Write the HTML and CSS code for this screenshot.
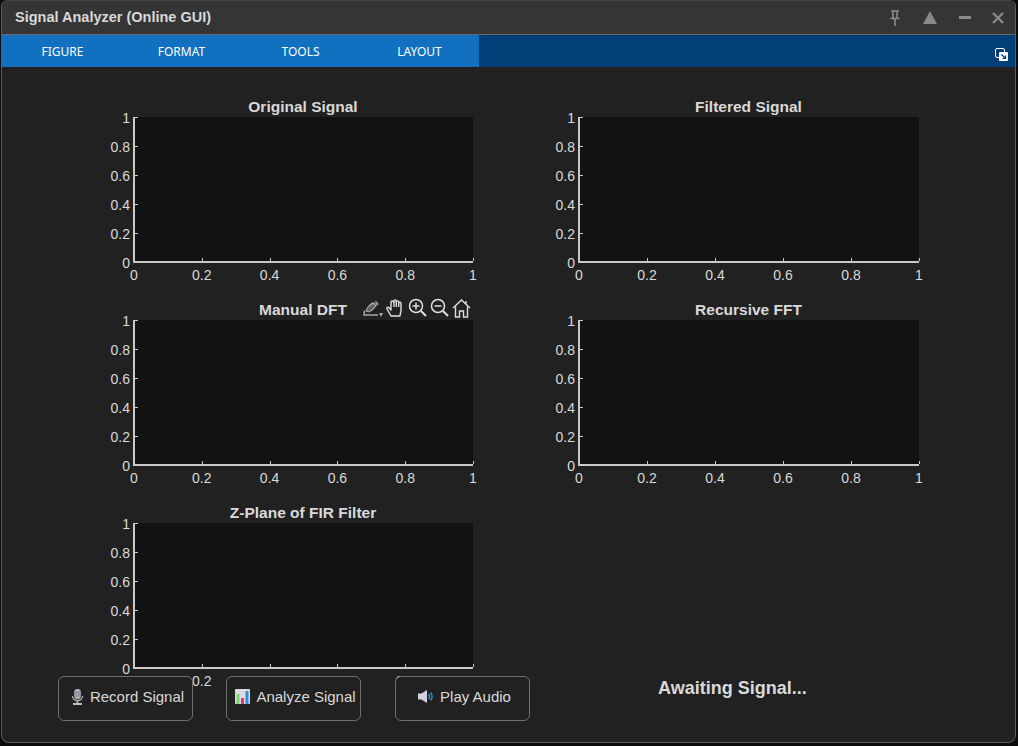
FILE: index.html
```html
<!DOCTYPE html>
<html lang="en">
<head>
  <meta charset="UTF-8" />
  <title>Signal Analyzer (Online GUI)</title>
  <link rel="stylesheet" href="styles.css">
</head>
<body>
  <div class="window">
    <header class="titlebar">
      <span class="title">Signal Analyzer (Online GUI)</span>
      <div class="win-buttons">
        <svg class="win-icon" width="14" height="16" viewBox="0 0 14 16"><path d="M3 1h8M5 1v7M9 1v7M2.500 8.500h9M7 8.500V16" fill="none" stroke="#8a8a8a" stroke-width="1.600"/></svg>
        <svg class="win-icon" width="14" height="13" viewBox="0 0 14 13"><path d="M7 0l7 13H0z" fill="#8a8a8a"/></svg>
        <svg class="win-icon" width="12" height="3" viewBox="0 0 12 3"><path d="M0 0h12v3H0z" fill="#8a8a8a"/></svg>
        <svg class="win-icon" width="12" height="12" viewBox="0 0 12 12"><path d="M1 1l10 10M11 1L1 11" stroke="#8a8a8a" stroke-width="2.400"/></svg>
      </div>
    </header>

    <nav class="ribbon">
      <div class="tabs">
        <a class="tab">FIGURE</a>
        <a class="tab">FORMAT</a>
        <a class="tab">TOOLS</a>
        <a class="tab">LAYOUT</a>
      </div>
      <svg class="undock" width="13" height="13" viewBox="0 0 13 13">
        <rect x="0.500" y="0.500" width="9" height="9" rx="1.500" fill="none" stroke="#fff"/>
        <rect x="4" y="4" width="9" height="9" rx="1" fill="#fff"/>
        <path d="M6.500 6.500l4 4M10.500 7.500v3h-3" fill="none" stroke="#003f78" stroke-width="1.200"/>
      </svg>
    </nav>

    <main class="figure">
      <div class="plots">
        <section class="axes">
          <h2 class="axes-title">Original Signal</h2>
          <div class="plot">
            <div class="yticks"><span>0</span><span>0.2</span><span>0.4</span><span>0.6</span><span>0.8</span><span>1</span></div>
            <div class="xticks"><span>0</span><span>0.2</span><span>0.4</span><span>0.6</span><span>0.8</span><span>1</span></div>
          </div>
        </section>

        <section class="axes">
          <h2 class="axes-title">Filtered Signal</h2>
          <div class="plot">
            <div class="yticks"><span>0</span><span>0.2</span><span>0.4</span><span>0.6</span><span>0.8</span><span>1</span></div>
            <div class="xticks"><span>0</span><span>0.2</span><span>0.4</span><span>0.6</span><span>0.8</span><span>1</span></div>
          </div>
        </section>

        <section class="axes">
          <h2 class="axes-title">Manual DFT</h2>
          <div class="axes-toolbar">
            <svg width="20" height="20" viewBox="0 0 20 20" fill="none" stroke="#a8a8a8" stroke-width="1.100">
              <path d="M3 13l2-4 5-4 3 3-4 4-3 2z" fill="#5f5f5f"/>
              <path d="M6 8c2-3 6-4 9-2M12.500 3l2.500 3-3 1.500"/>
              <path d="M1.500 12.500L1 17h14" stroke-width="1.500"/>
              <path d="M16 15h4l-2 4z" fill="#a8a8a8" stroke="none"/>
            </svg>
            <svg width="19" height="20" viewBox="0 0 19 20" fill="none" stroke="#e0e0e0" stroke-width="1.400" stroke-linejoin="round">
              <path d="M5 18L1 11c-.7-1.500 1-2.500 2-1.300L5 12V4c0-1.500 2-1.500 2.200 0L8 3c0-1.500 2.200-1.500 2.300 0v1c.2-1.500 2.300-1.500 2.400 0v1c.3-1.300 2.300-1.200 2.300.3V12c0 2-.7 3-1 6z"/>
              <path d="M8 3v6M10.300 4v5M12.700 5v4"/>
            </svg>
            <svg width="19" height="20" viewBox="0 0 19 20" fill="none" stroke="#e0e0e0" stroke-width="1.500">
              <circle cx="8" cy="8" r="6.500"/>
              <path d="M8 4.500v7M4.500 8h7"/>
              <path d="M13 13l5 5" stroke-width="2"/>
            </svg>
            <svg width="19" height="20" viewBox="0 0 19 20" fill="none" stroke="#e0e0e0" stroke-width="1.500">
              <circle cx="8" cy="8" r="6.500"/>
              <path d="M4.500 8h7"/>
              <path d="M13 13l5 5" stroke-width="2"/>
            </svg>
            <svg width="19" height="20" viewBox="0 0 19 20" fill="none" stroke="#e0e0e0" stroke-width="1.400">
              <path d="M1 10l8.500-8L18 10"/>
              <path d="M3.500 8.500V19h4v-6h4v6h4V8.500M14 3v3"/>
            </svg>
          </div>
          <div class="plot">
            <div class="yticks"><span>0</span><span>0.2</span><span>0.4</span><span>0.6</span><span>0.8</span><span>1</span></div>
            <div class="xticks"><span>0</span><span>0.2</span><span>0.4</span><span>0.6</span><span>0.8</span><span>1</span></div>
          </div>
        </section>

        <section class="axes">
          <h2 class="axes-title">Recursive FFT</h2>
          <div class="plot">
            <div class="yticks"><span>0</span><span>0.2</span><span>0.4</span><span>0.6</span><span>0.8</span><span>1</span></div>
            <div class="xticks"><span>0</span><span>0.2</span><span>0.4</span><span>0.6</span><span>0.8</span><span>1</span></div>
          </div>
        </section>

        <section class="axes">
          <h2 class="axes-title">Z-Plane of FIR Filter</h2>
          <div class="plot">
            <div class="yticks"><span>0</span><span>0.2</span><span>0.4</span><span>0.6</span><span>0.8</span><span>1</span></div>
            <div class="xticks"><span>0</span><span>0.2</span><span>0.4</span><span>0.6</span><span>0.8</span><span>1</span></div>
          </div>
        </section>
      </div>

      <!-- sits over the bottom plot's x labels, same as in the app -->
      <div class="controls">
        <button class="btn">
          <svg width="13" height="16" viewBox="0 0 13 16">
            <rect x="3" y="0" width="7" height="10" rx="3.500" fill="#b9b2c9"/>
            <path d="M3 3h7M3 5h7M3 7h7" stroke="#6d6878" stroke-width="0.800"/>
            <path d="M1.500 7c0 6 10 6 10 0" fill="none" stroke="#a9a9a9" stroke-width="1.400"/>
            <path d="M6.500 12v2" stroke="#a9a9a9" stroke-width="2"/>
            <path d="M2 15h9" stroke="#bdbdbd" stroke-width="2"/>
          </svg>
          Record Signal
        </button>
        <button class="btn">
          <svg width="15" height="15" viewBox="0 0 15 15">
            <rect width="15" height="15" rx="1" fill="#dcdce0"/>
            <rect x="1.500" y="5" width="3" height="10" fill="#7ed56f"/>
            <rect x="6" y="9" width="3" height="6" fill="#e8327c"/>
            <rect x="10.500" y="2" width="3" height="13" fill="#2f8fdc"/>
          </svg>
          Analyze Signal
        </button>
        <button class="btn btn-play">
          <svg width="16" height="13" viewBox="0 0 16 13" fill="none">
            <path d="M0 3.500h3.500L9 0v13L3.500 9.500H0z" fill="#d6d3de"/>
            <path d="M10.500 4c1.200 1.500 1.200 3.500 0 5M12.500 2.500c2 2.500 2 5.500 0 8" stroke="#2f8fdc" stroke-width="1.400"/>
          </svg>
          Play Audio
        </button>
        <span class="status">Awaiting Signal...</span>
      </div>
    </main>
  </div>
</body>
</html>
```

FILE: styles.css
```css
html, body {
  margin: 0;
  height: 100%;
  background-color: #0c0c0c;
  overflow: hidden;
}

.window {
  box-sizing: border-box;
  display: flex;
  flex-direction: column;
  width: 1015px;
  height: 743px;
  margin-left: 1px;
  border: 1px solid #5c5c5c;
  border-top-color: #444;
  border-radius: 6px 6px 8px 8px;
  overflow: hidden;
  background-color: #212121;
  font-family: "Liberation Sans", Arial, sans-serif;
}

.titlebar {
  display: flex;
  align-items: center;
  justify-content: space-between;
  flex: none;
  height: 33px;
  padding: 0 11px 0 13px;
  background-color: #353535;
  border-bottom: 1px solid #6a6a6a;
}

.title {
  margin-top: -2px;
  font-size: 14.5px;
  font-weight: bold;
  color: #d8d8d8;
}

.win-buttons {
  display: flex;
  align-items: center;
  gap: 21.5px;
}

.ribbon {
  display: flex;
  align-items: center;
  justify-content: space-between;
  flex: none;
  height: 32px;
  padding-right: 7px;
  background-color: #003f78;
}

.undock {
  margin-top: 6px;
}

.tabs {
  display: flex;
  width: 477px;
  height: 100%;
  padding-left: 1px;
  box-sizing: border-box;
  background-color: #1170bf;
}

.tab {
  display: flex;
  align-items: center;
  justify-content: center;
  width: 119px;
  font-family: "Noto Sans", sans-serif;
  font-size: 12px;
  color: #fff;
}

.figure {
  position: relative;
  flex: 1;
  padding: 50px 0 0 131px;
}

.plots {
  display: grid;
  grid-template-columns: 340px 341px;
  grid-auto-rows: 146px;
  column-gap: 105px;
  row-gap: 57px;
}

.axes {
  position: relative;
  display: flex;
}

.axes-title {
  position: absolute;
  left: 0;
  right: 0;
  top: -19px;
  margin: 0;
  font-size: 15.5px;
  font-weight: bold;
  line-height: 17px;
  text-align: center;
  color: #d9d9d9;
}

.axes-toolbar {
  position: absolute;
  right: 2px;
  top: -22px;
  display: flex;
  gap: 3px;
}

.plot {
  position: relative;
  box-sizing: border-box;
  flex: 1;
  background-color: #121212;
  border-left: 2px solid #c9c9c9;
  border-bottom: 2px solid #c9c9c9;
  font-size: 14px;
  color: #d9d9d9;
}

.yticks {
  position: absolute;
  left: -5px;
  top: 1px;
  bottom: -2px;
  display: flex;
  flex-direction: column-reverse;
  justify-content: space-between;
}

.yticks span {
  display: flex;
  align-items: center;
  justify-content: flex-end;
  position: relative;
  height: 0;
  width: 0;
  white-space: nowrap;
}

.yticks span::after {
  content: "";
  position: absolute;
  left: 5px;
  top: -1px;
  width: 3px;
  height: 1px;
  background-color: #c9c9c9;
}

.xticks {
  position: absolute;
  left: -1px;
  right: 0;
  top: 100%;
  display: flex;
  justify-content: space-between;
}

.xticks span {
  position: relative;
  display: flex;
  justify-content: center;
  width: 0;
  height: 0;
  padding-top: 6px;
  line-height: 16px;
  white-space: nowrap;
}

.xticks span::after {
  content: "";
  position: absolute;
  left: 0;
  top: -3px;
  width: 1px;
  height: 3px;
  background-color: #c9c9c9;
}

.controls {
  position: absolute;
  left: 56px;
  top: 609px;
  display: flex;
  align-items: center;
}

.btn {
  box-sizing: border-box;
  display: flex;
  align-items: center;
  justify-content: center;
  gap: 6px;
  width: 135px;
  height: 45px;
  margin-right: 33px;
  padding: 0 0 4px 4px;
  background-color: #212121;
  border: 1px solid #6f6f6f;
  border-radius: 6px;
  font-family: "Liberation Sans", Arial, sans-serif;
  font-size: 15px;
  color: #d9d9d9;
}

.btn-play {
  margin-left: 1px;
}

.status {
  margin-left: 95px;
  margin-top: -20px;
  font-size: 18px;
  font-weight: bold;
  color: #d9d9d9;
}
```
